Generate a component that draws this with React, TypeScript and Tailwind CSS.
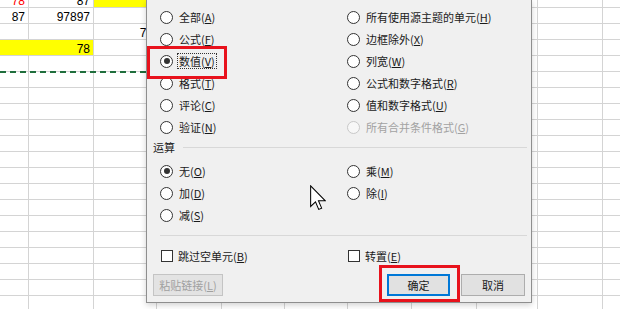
import React from "react";

type Cell = { text?: string; red?: boolean; yellow?: boolean };

// visible sheet cells, row -> column -> cell
const SHEET: Record<number, Record<number, Cell>> = {
  0: { 0: { text: "78", red: true }, 1: { text: "87" }, 2: { yellow: true } },
  1: { 0: { text: "87" }, 1: { text: "97897" } },
  2: { 2: { text: "78" } },
  3: { 0: { yellow: true }, 1: { text: "78", yellow: true } },
};

const COLS = 11;
const ROW_COUNT = 21;

function Sheet() {
  return (
    <div className="mt-[-8px] font-['Liberation_Sans',Arial,sans-serif] text-[12px] text-black">
      {Array.from({ length: ROW_COUNT }).map((_, r) => (
        <div
          key={r}
          className="relative grid grid-cols-[29px_65px_63px_65px_63px_63px_64px_65px_61px_65px_65px]"
        >
          {Array.from({ length: COLS }).map((_, c) => {
            const cell = SHEET[r]?.[c];
            return (
              <div
                key={c}
                className={`h-[16px] overflow-hidden whitespace-nowrap border-b border-r border-b-[#d4d4d4] pr-[3px] text-right leading-[18px] ${
                  cell?.yellow ? "bg-[#ffff00]" : "bg-white"
                } ${cell?.yellow && c === 0 ? "border-r-[#ffff00]" : "border-r-[#d4d4d4]"} ${
                  cell?.red ? "text-[#ff0000]" : ""
                }`}
              >
                {cell?.text}
              </div>
            );
          })}
          {/* copy marquee, ends under the dialog */}
          {r === 4 && (
            <div className="absolute bottom-[-1px] left-0 z-10 h-[2px] w-[350px] bg-[repeating-linear-gradient(90deg,#1f6e3c_0_6px,transparent_6px_10px)]" />
          )}
        </div>
      ))}
    </div>
  );
}

function Key({ label, k }: { label: string; k: string }) {
  return (
    <>
      {label}(<u>{k}</u>)
    </>
  );
}

function Radio({
  label,
  k,
  checked,
  disabled,
  focus,
}: {
  label: string;
  k: string;
  checked?: boolean;
  disabled?: boolean;
  focus?: boolean;
}) {
  return (
    <div className="flex h-[22px] items-center gap-[6px]">
      <span
        className={`flex h-[13px] w-[13px] shrink-0 items-center justify-center rounded-full border ${
          disabled ? "border-[#c8c8c8] bg-[#f7f7f7]" : "border-[#333] bg-white"
        }`}
      >
        {checked && <span className="h-[6px] w-[6px] rounded-full bg-[#333]" />}
      </span>
      <span
        className={`whitespace-nowrap leading-[14px] ${disabled ? "text-[#a2a2a2]" : "text-[#1a1a1a]"} ${
          focus ? "-ml-[2px] border border-dotted border-[#333] px-[1px]" : ""
        }`}
      >
        <Key label={label} k={k} />
      </span>
    </div>
  );
}

function Check({ label, k }: { label: string; k: string }) {
  return (
    <div className="ml-[1px] flex h-[21px] items-center gap-[5px]">
      <span className="h-[12px] w-[12px] shrink-0 border border-[#333] bg-white" />
      <span className="whitespace-nowrap leading-[14px] text-[#1a1a1a]">
        <Key label={label} k={k} />
      </span>
    </div>
  );
}

function Cursor() {
  return (
    <svg width="16" height="26" viewBox="0 0 12.5 20" className="absolute left-[163px] top-[185px]">
      <path
        d="M0.5 0.5 V16.6 L4.3 13 L6.8 18.9 L9.1 17.9 L6.6 12.1 H11.8 Z"
        fill="#fff"
        stroke="#000"
        strokeWidth="0.8"
        strokeLinejoin="miter"
      />
    </svg>
  );
}

function PasteDialog() {
  return (
    <div className="absolute left-[146px] top-0 z-20 h-[303px] w-[386px] border border-t-0 border-[#8e8e8e] bg-[#f0f0f0] font-['Noto_Sans_CJK_SC',sans-serif] text-[11px] shadow-[0_2px_6px_rgba(0,0,0,0.18)]">
      {/* 粘贴 */}
      <div className="grid grid-cols-[187px_1fr] px-[13px] pt-[6px]">
        <div>
          <Radio label="全部" k="A" />
          <Radio label="公式" k="F" />
          <Radio label="数值" k="V" checked focus />
          <Radio label="格式" k="T" />
          <Radio label="评论" k="C" />
          <Radio label="验证" k="N" />
        </div>
        <div>
          <Radio label="所有使用源主题的单元" k="H" />
          <Radio label="边框除外" k="X" />
          <Radio label="列宽" k="W" />
          <Radio label="公式和数字格式" k="R" />
          <Radio label="值和数字格式" k="U" />
          <Radio label="所有合并条件格式" k="G" disabled />
        </div>
      </div>

      {/* 运算 */}
      <div className="flex h-[18px] items-center pl-[6px] pr-[4px]">
        <span className="leading-[14px] text-[#1a1a1a]">运算</span>
        <span className="ml-[8px] h-px flex-1 bg-[#d8d8d8]" />
      </div>
      <div className="mt-[4px] grid grid-cols-[187px_1fr] px-[13px]">
        <div>
          <Radio label="无" k="O" checked />
          <Radio label="加" k="D" />
          <Radio label="减" k="S" />
        </div>
        <div>
          <Radio label="乘" k="M" />
          <Radio label="除" k="I" />
        </div>
      </div>

      <div className="ml-[13px] mr-[4px] mt-[9px] h-px bg-[#d8d8d8]" />

      <div className="mt-[9px] grid grid-cols-[187px_1fr] px-[13px]">
        <Check label="跳过空单元" k="B" />
        <Check label="转置" k="E" />
      </div>

      <div className="mt-[8px] flex items-center pl-[6px] pr-[6px]">
        <button className="h-[22px] w-[70px] border border-[#c4c4c4] bg-[#e3e3e3] text-[#a0a0a0]">
          <Key label="粘贴链接" k="L" />
        </button>
        <button className="ml-auto h-[22px] w-[63px] border-2 border-[#0078d7] bg-[#e1e1e1] text-[#1a1a1a]">
          确定
        </button>
        <button className="ml-[11px] h-[22px] w-[64px] border border-[#adadad] bg-[#e1e1e1] text-[#1a1a1a]">
          取消
        </button>
      </div>

      {/* annotations */}
      <div className="absolute left-0 top-[46px] h-[33px] w-[80px] border-[3px] border-[#e8121c]" />
      <div className="absolute left-[232px] top-[265px] h-[37px] w-[81px] border-[3px] border-[#e8121c]" />
      <Cursor />
    </div>
  );
}

export default function App() {
  return (
    <div className="relative h-[309px] w-[620px] overflow-hidden bg-white">
      <Sheet />
      <PasteDialog />
    </div>
  );
}
